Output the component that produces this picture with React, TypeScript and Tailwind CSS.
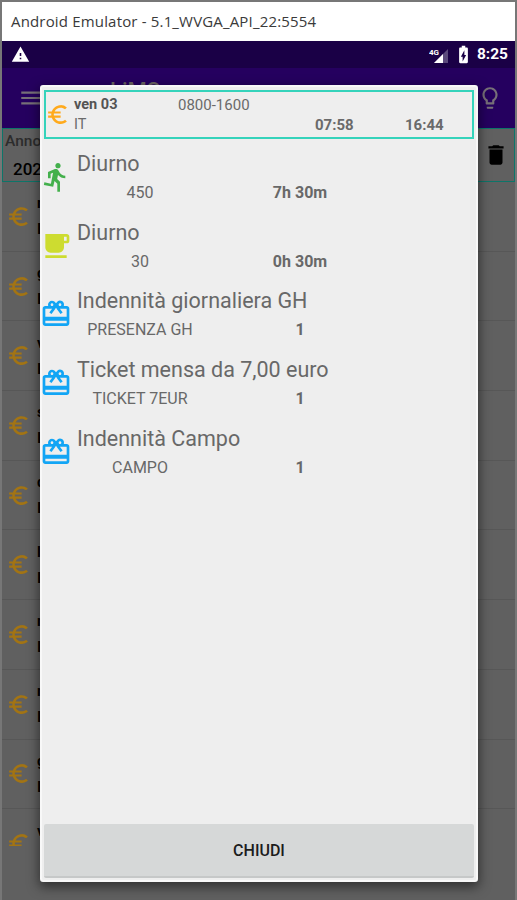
import type { IconType } from "react-icons";
import {
  MdBatteryChargingFull,
  MdDelete,
  MdDirectionsRun,
  MdEuroSymbol,
  MdFreeBreakfast,
  MdLightbulbOutline,
  MdMenu,
  MdRedeem,
  MdWarning,
} from "react-icons/md";

interface Voce {
  titolo: string;
  codice: string;
  valore: string;
  icon: IconType;
  color: string;
}

const voci: Voce[] = [
  { titolo: "Diurno", codice: "450", valore: "7h 30m", icon: MdDirectionsRun, color: "text-[#43b04c]" },
  { titolo: "Diurno", codice: "30", valore: "0h 30m", icon: MdFreeBreakfast, color: "text-[#cddc30]" },
  { titolo: "Indennità giornaliera GH", codice: "PRESENZA GH", valore: "1", icon: MdRedeem, color: "text-[#12a5f5]" },
  { titolo: "Ticket mensa da 7,00 euro", codice: "TICKET 7EUR", valore: "1", icon: MdRedeem, color: "text-[#12a5f5]" },
  { titolo: "Indennità Campo", codice: "CAMPO", valore: "1", icon: MdRedeem, color: "text-[#12a5f5]" },
];

const giorni = ["m", "g", "v", "s", "d", "l", "m", "m", "g"];

function StatusBar() {
  return (
    <div className="flex h-[27px] shrink-0 items-center bg-[#1a0046] pl-[9px] pr-[7px] text-white">
      <MdWarning className="size-[19px]" />
      <div className="ml-auto flex items-center">
        <svg viewBox="0 0 20 18" className="mr-[4px] h-[18px] w-5">
          <path d="M19 3v14H5z" fill="#5b4a7c" />
          <path d="M14 8v9H5z" fill="#fff" />
          <text x="0" y="9" fontSize="8" fontWeight="bold" fill="#fff" fontFamily="Roboto, sans-serif">4G</text>
        </svg>
        <MdBatteryChargingFull className="mr-[3px] size-[21px]" />
        <span className="text-[15.5px] font-bold leading-none">8:25</span>
      </div>
    </div>
  );
}

function Toolbar() {
  return (
    <div className="flex h-[60px] shrink-0 bg-[#25005f] pl-[16px] text-[#777078]">
      <MdMenu className="mt-[17px] size-[26px]" />
      <span className="ml-[66px] mt-[10px] text-[22px] font-medium leading-[26px] text-[#6b6462]">LiMS</span>
      <MdLightbulbOutline className="ml-auto mr-[12px] mt-[17px] size-[26px]" />
    </div>
  );
}

function Filtro() {
  return (
    <div className="flex h-[54px] shrink-0 items-center justify-between border border-[#0d7569] bg-[#606060]">
      <div className="text-black">
        <div className="pl-[2px] text-[15.5px] font-medium leading-[20px] text-[#2c2c2c]">Anno</div>
        <div className="pl-[10px] pt-[7px] text-[17px] font-medium leading-[22px]">2020</div>
      </div>
      <MdDelete className="mr-[5px] size-[26px] text-black" />
    </div>
  );
}

function Dettaglio() {
  return (
    <div className="absolute left-[40px] top-[85px] flex h-[797px] w-[438px] flex-col rounded-[3px] border-2 border-[#f8f8f8] bg-[#eeeeee] shadow-[0_4px_12px_1px_rgba(0,0,0,0.5)]">
      <div className="ml-[2px] mt-[3px] flex h-[49px] w-[430px] items-center border-2 border-[#35d3bb] text-[14.5px] leading-[20px] text-[#6a6a6a]">
        <MdEuroSymbol className="-ml-px size-[25px] text-[#ffaa1c]" />
        <div className="ml-[4px] flex-1 pt-px">
          <div className="flex">
            <span className="w-[104px] font-bold text-[#545454]">ven 03</span>
            <span className="text-[15px]">0800-1600</span>
          </div>
          <div className="flex">
            <span className="w-[241px]">IT</span>
            <span className="w-[90px] text-[15px] font-bold">07:58</span>
            <span className="text-[15px] font-bold">16:44</span>
          </div>
        </div>
      </div>

      <div className="mt-[10px] flex flex-1 flex-col">
        {voci.map(({ titolo, codice, valore, icon: Icon, color }) => (
          <div key={titolo + codice} className="flex h-[68.7px] text-[#686868]">
            <Icon className={`-ml-[2px] mt-[12px] size-8 shrink-0 ${color}`} />
            <div className="ml-[5px]">
              <div className="text-[21.5px] leading-[30px]">{titolo}</div>
              <div className="flex text-[16px] leading-[27px]">
                <span className="w-[126px] text-center">{codice}</span>
                <span className="ml-[17px] w-[160px] text-center font-bold">{valore}</span>
              </div>
            </div>
          </div>
        ))}
      </div>

      <button className="mx-[2px] mb-[2px] h-[54px] rounded-[2px] border-b-2 border-[#c6c8c8] bg-[#d6d8d8] pt-[2px] text-[16px] font-medium text-[#1c1c1c]">
        CHIUDI
      </button>
    </div>
  );
}

export default function App() {
  return (
    <div className="relative flex h-[900px] w-[517px] flex-col overflow-hidden bg-[#777777] px-[2px] pt-[2px] font-[Roboto,sans-serif]">
      <div className="flex h-[39px] shrink-0 items-center bg-white pl-[9px] font-['Open_Sans',sans-serif] text-[15px] tracking-[0.17px] text-[#3a3a3a]">
        Android Emulator - 5.1_WVGA_API_22:5554
      </div>
      <StatusBar />
      <Toolbar />
      <Filtro />
      <div className="flex-1 bg-[#606060]">
        {giorni.map((giorno, i) => (
          <div key={i} className="flex h-[69.7px] items-center overflow-hidden border-b border-[#575757]">
            <MdEuroSymbol className="ml-[4px] size-[25px] shrink-0 text-[#a37413]" />
            <div className="ml-[6px] text-[15px] font-bold leading-[26px] text-black">
              <div>{giorno}</div>
              <div>IT</div>
            </div>
          </div>
        ))}
        {/* last row is cut off by the end of the list */}
        <div className="flex h-[37px] overflow-hidden">
          <MdEuroSymbol className="ml-[4px] mt-[22px] size-[25px] shrink-0 text-[#a37413]" />
          <div className="ml-[6px] mt-[9px] text-[15px] font-bold leading-[26px] text-black">v</div>
        </div>
      </div>
      <Dettaglio />
    </div>
  );
}
